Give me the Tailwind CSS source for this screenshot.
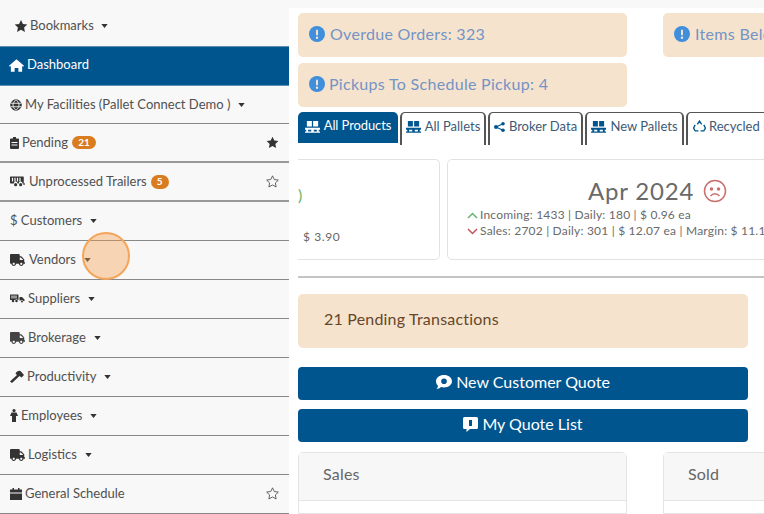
<!DOCTYPE html>
<html><head><meta charset="utf-8">
<script src="https://cdn.jsdelivr.net/npm/@tailwindcss/browser@4"></script>
</head>
<body class="m-0 w-[764px] h-[514px] overflow-hidden bg-white font-['Lato','Open_Sans',sans-serif]">
<svg class="hidden"><defs>
<symbol id="star" viewBox="0 0 24 24"><path d="M12 1.500l3.300 6.900 7.500 1-5.500 5.200 1.400 7.500L12 18.400l-6.700 3.700 1.400-7.500L1.200 9.400l7.500-1z"/></symbol>
<symbol id="truck" viewBox="0 0 640 512"><path d="M624 352h-16V243.900c0-12.700-5.100-24.900-14.100-33.900L494 110.100c-9-9-21.200-14.100-33.900-14.100H416V48c0-26.500-21.500-48-48-48H48C21.500 0 0 21.500 0 48v320c0 26.500 21.500 48 48 48h16c0 53 43 96 96 96s96-43 96-96h128c0 53 43 96 96 96s96-43 96-96h48c8.800 0 16-7.200 16-16v-32c0-8.800-7.200-16-16-16zM160 464c-26.500 0-48-21.500-48-48s21.500-48 48-48 48 21.500 48 48-21.500 48-48 48zm320 0c-26.500 0-48-21.500-48-48s21.500-48 48-48 48 21.500 48 48-21.500 48-48 48zm80-208H416V144h44.100l99.900 99.900V256z"/></symbol>
<symbol id="pallet" viewBox="0 0 24 20"><path d="M3 1h8v9H3zM13 1h8v9h-8zM0 12h24v3h-2v3h2v2H0v-2h2v-3H0zM5 15v3h5v-3zM14 15v3h5v-3z"/></symbol>
<symbol id="trailer" viewBox="0 0 24 16"><path fill-rule="evenodd" d="M1 0h20a1 1 0 0 1 1 1v10h-2a3 3 0 0 0-6 0h-2a3 3 0 0 0-6 0H1a1 1 0 0 1-1-1V1a1 1 0 0 1 1-1zM3 2v6h2V2zM7 2v6h2V2zM11 2v6h2V2zM15 2v6h2V2z"/><circle cx="9" cy="13" r="2.500"/><circle cx="17" cy="13" r="2.500"/><rect x="21" y="11" width="3" height="2"/></symbol>
<symbol id="haul" viewBox="0 0 30 16"><path fill-rule="evenodd" d="M1 0h15a1 1 0 0 1 1 1v10h-1.500a3 3 0 0 0-5 0H1a1 1 0 0 1-1-1V1a1 1 0 0 1 1-1zM3 2v6h2V2zM7 2v6h2V2zM11 2v6h2V2z"/><circle cx="6" cy="13" r="2.500"/><circle cx="13" cy="13" r="2.500"/><path d="M19 5h5l5 5v3h-2.500a3 3 0 0 0-5-1H19z"/><circle cx="24" cy="14" r="2"/></symbol>
<symbol id="alert" viewBox="0 0 16 16"><circle cx="8" cy="8" r="8" fill="#3f8fdc"/><rect x="7" y="3.500" width="2" height="6" rx="1" fill="#f6e3cd"/><circle cx="8" cy="11.800" r="1.200" fill="#f6e3cd"/></symbol>
<symbol id="caret" viewBox="0 0 8 5"><path d="M0 0h8L4 5z"/></symbol>
</defs></svg>

<div class="flex h-[514px] relative">
  <nav class="w-[289px] shrink-0 bg-[#f8f8f8] text-[13px] text-[#505050] flex flex-col">
    <div class="h-[46px] flex items-center pt-[5px] pl-[14px] gap-[2px]"><svg class="w-[14px] h-[14px] fill-[#333]"><use href="#star"/></svg><span>Bookmarks</span><svg class="w-[7px] h-[4px] ml-[5px] fill-[#333]"><use href="#caret"/></svg></div>
    <div class="h-[40px] flex items-center pb-[2px] pl-[9px] gap-[3px] bg-[#00558f] text-white border-y border-[#5d8fb0]"><svg class="w-[15px] h-[13px] fill-white" viewBox="0 0 24 20"><path d="M12 0l12 10.500-1.500 1.500L21 10.800V20h-6v-6H9v6H3v-9.200L1.500 12 0 10.500z"/></svg><span>Dashboard</span></div>
    <div class="h-[38px] flex items-center pl-[10px] gap-[3px] border-b border-[#888]"><svg class="w-[12px] h-[12px] fill-none stroke-[#333] stroke-[2]" viewBox="0 0 24 24"><circle cx="12" cy="12" r="10.500" fill="#333"/><path d="M12 1.500c-8 7-8 14 0 21M12 1.500c8 7 8 14 0 21M1.500 8.500h21M1.500 15.500h21" stroke="#f8f8f8" stroke-width="1.800"/></svg><span>My Facilities (Pallet Connect Demo )</span><svg class="w-[7px] h-[4px] ml-[5px] fill-[#333]"><use href="#caret"/></svg></div>
    <div class="h-[39px] flex items-center pl-[10px] pr-[10px] gap-[3px] border-b-2 border-[#999]"><svg class="w-[9px] h-[12px] fill-[#333]" viewBox="0 0 9 12"><path d="M3 0h3v1.500h2a1 1 0 0 1 1 1V11a1 1 0 0 1-1 1H1a1 1 0 0 1-1-1V2.500a1 1 0 0 1 1-1h2zM1.500 5v1h6V5zM1.500 7.500v1h6v-1z" fill-rule="evenodd"/></svg><span>Pending</span><span class="ml-[1px] w-[24px] h-[13px] rounded-full bg-[#d97c1f] text-white text-[10px] font-bold flex items-center justify-center">21</span><svg class="ml-auto w-[13px] h-[13px] fill-[#333]"><use href="#star"/></svg></div>
    <div class="h-[39px] flex items-center pl-[10px] pr-[10px] gap-[3px] border-b-2 border-[#999]"><svg class="w-[15px] h-[11px] fill-[#333]"><use href="#trailer"/></svg><span class="ml-[1px]">Unprocessed Trailers</span><span class="ml-[1px] w-[18px] h-[14px] rounded-full bg-[#d97c1f] text-white text-[10px] font-bold flex items-center justify-center">5</span><svg class="ml-auto w-[13px] h-[13px] fill-none stroke-[#444] stroke-[1.500]"><use href="#star"/></svg></div>
    <div class="h-[39px] flex items-center pl-[10px] gap-[3px] border-b border-[#888]"><span>$ Customers</span><svg class="w-[7px] h-[4px] ml-[5px] fill-[#333]"><use href="#caret"/></svg></div>
    <div class="h-[39px] flex items-center pb-[1px] pl-[10px] gap-[4px] border-b border-[#888]"><svg class="w-[15px] h-[12px] fill-[#333]"><use href="#truck"/></svg><span>Vendors</span><svg class="w-[7px] h-[4px] ml-[4px] fill-[#333]"><use href="#caret"/></svg></div>
    <div class="h-[39px] flex items-center pb-[1px] pl-[10px] gap-[3px] border-b border-[#888]"><svg class="w-[15px] h-[11px] fill-[#333]"><use href="#haul"/></svg><span>Suppliers</span><svg class="w-[7px] h-[4px] ml-[5px] fill-[#333]"><use href="#caret"/></svg></div>
    <div class="h-[39px] flex items-center pl-[10px] gap-[3px] border-b border-[#888]"><svg class="w-[15px] h-[12px] fill-[#444]"><use href="#truck"/></svg><span>Brokerage</span><svg class="w-[7px] h-[4px] ml-[5px] fill-[#333]"><use href="#caret"/></svg></div>
    <div class="h-[39px] flex items-center pb-[1px] pl-[10px] gap-[3px] border-b border-[#888]"><svg class="w-[14px] h-[13px] fill-[#333]" viewBox="0 0 14 13"><path d="M0 11.500L7 5 5.500 3.500C7 1 9.500 0 11 1.500l3 3.500-2.500 2.500L9.500 6 2 13z"/></svg><span>Productivity</span><svg class="w-[7px] h-[4px] ml-[5px] fill-[#333]"><use href="#caret"/></svg></div>
    <div class="h-[39px] flex items-center pb-[1px] pl-[10px] gap-[3px] border-b border-[#888]"><svg class="w-[8px] h-[13px] fill-[#333]" viewBox="0 0 8 13"><circle cx="4" cy="1.600" r="1.600"/><path d="M1.500 3.500h5L8 7H6v6H2V7H0z"/></svg><span>Employees</span><svg class="w-[7px] h-[4px] ml-[5px] fill-[#333]"><use href="#caret"/></svg></div>
    <div class="h-[39px] flex items-center pb-[1px] pl-[10px] gap-[3px] border-b border-[#888]"><svg class="w-[15px] h-[12px] fill-[#333]"><use href="#truck"/></svg><span>Logistics</span><svg class="w-[7px] h-[4px] ml-[5px] fill-[#333]"><use href="#caret"/></svg></div>
    <div class="h-[39px] shrink-0 flex items-center pb-[1px] pl-[10px] pr-[10px] gap-[3px] border-b border-[#888]"><svg class="w-[12px] h-[12px] fill-[#333]" viewBox="0 0 12 12"><path d="M2.500 0h1.500v1.500h4V0h1.500v1.500H12v3H0v-3h2.500zM0 5.500h12V12H0z"/></svg><span>General Schedule</span><svg class="ml-auto w-[13px] h-[13px] fill-none stroke-[#444] stroke-[1.500]"><use href="#star"/></svg></div>
  </nav>

  <main class="flex-1 min-w-0 overflow-hidden">
    <div class="h-[8px] bg-[#f8f8f8]"></div>
    <div class="pl-[9px] pt-[5px] w-[475px]">
      <div class="flex gap-[36px] w-[700px]">
        <div class="w-[329px] h-[44px] rounded-[5px] bg-[#f6e3cd] flex items-center pb-[3px] pl-[11px] gap-[5px] text-[16px] tracking-[0.3px] text-[#7394c6]"><svg class="w-[16px] h-[16px] shrink-0"><use href="#alert"/></svg><span>Overdue Orders: 323</span></div>
        <div class="w-[329px] h-[44px] rounded-[5px] bg-[#f6e3cd] flex items-center pb-[3px] pl-[11px] gap-[5px] text-[16px] tracking-[0.3px] text-[#7394c6]"><svg class="w-[16px] h-[16px] shrink-0"><use href="#alert"/></svg><span>Items Below</span></div>
      </div>
      <div class="mt-[6px] w-[329px] h-[44px] rounded-[5px] bg-[#f6e3cd] flex items-center pb-[3px] pl-[11px] gap-[4px] text-[16px] tracking-[0.3px] text-[#7394c6]"><svg class="w-[16px] h-[16px] shrink-0"><use href="#alert"/></svg><span>Pickups To Schedule Pickup: 4</span></div>

      <div class="mt-[5px] flex gap-[2px] h-[33px] w-[700px] text-[13px] items-start">
        <div class="w-[100px] h-[31px] pb-[3px] rounded-t-[5px] bg-[#00558f] text-white flex items-center justify-center gap-[4px]"><svg class="w-[15px] h-[13px] fill-white shrink-0"><use href="#pallet"/></svg><span class="tracking-[-0.1px]">All Products</span></div>
        <div class="w-[86px] h-[33px] pb-[5px] rounded-t-[5px] border-x-2 border-t border-[#555] text-[#3d5a75] flex items-center justify-center gap-[4px]"><svg class="w-[15px] h-[13px] fill-[#00558f] shrink-0"><use href="#pallet"/></svg><span>All Pallets</span></div>
        <div class="w-[95px] h-[33px] pb-[5px] rounded-t-[5px] border-x-2 border-t border-[#555] text-[#3d5a75] flex items-center justify-center gap-[4px]"><svg class="w-[11px] h-[10px] fill-[#00558f] shrink-0" viewBox="0 0 11 10"><circle cx="2" cy="5" r="2"/><circle cx="9" cy="1.800" r="1.800"/><circle cx="9" cy="8.200" r="1.800"/><path d="M2 5l7-3.200M2 5l7 3.200" stroke="#00558f" stroke-width="1.200"/></svg><span>Broker Data</span></div>
        <div class="w-[99px] h-[33px] pb-[5px] rounded-t-[5px] border-x-2 border-t border-[#555] text-[#3d5a75] flex items-center justify-center gap-[4px]"><svg class="w-[15px] h-[13px] fill-[#00558f] shrink-0"><use href="#pallet"/></svg><span>New Pallets</span></div>
        <div class="w-[120px] h-[33px] pb-[5px] rounded-t-[5px] border-x-2 border-t border-[#555] text-[#3d5a75] flex items-center pl-[5px] gap-[3px]"><svg class="w-[13px] h-[13px] shrink-0 fill-none stroke-[#00558f] stroke-[2.500]" viewBox="0 0 24 24"><path d="M8 8l4-6 4 6M20 9l3 6-3 5h-6M4 9l-3 6 3 5h6"/></svg><span class="whitespace-nowrap">Recycled Pallets</span></div>
      </div>

      <div class="mt-[14px] flex gap-[7px] w-[700px] h-[101px] -ml-[9px] pl-[9px] overflow-hidden">
        <div class="w-[142px] shrink-0 h-full border-y border-r border-[#e2e2e2] rounded-r-[5px] flex flex-col text-[#666]">
          <span class="text-[#69b56b] text-[16px] leading-none mt-[27px]">)</span>
          <span class="text-[12px] tracking-[0.6px] mt-[25px] pl-[5px]">$ 3.90</span>
        </div>
        <div class="w-[500px] shrink-0 h-full border border-[#e2e2e2] rounded-[5px] pl-[19px] relative text-[#6a6a6a]">
          <div class="absolute left-[140px] top-[16px] flex items-center gap-[9px] whitespace-nowrap text-[24px] leading-[30px] tracking-[0.8px]"><span>Apr 2024</span><svg class="w-[24px] h-[24px] fill-none stroke-[#c9706f] stroke-[1.500]" viewBox="0 0 24 24"><circle cx="12" cy="12" r="10.500"/><path d="M7.500 17c2.500-3 6.500-3 9 0"/><circle cx="8.500" cy="10" r="1" fill="#c9706f"/><circle cx="15.500" cy="10" r="1" fill="#c9706f"/></svg></div>
          <div class="pt-[47px] text-[12px] leading-[16px] tracking-[0.2px] whitespace-nowrap">
            <div class="flex items-center gap-[2px]"><svg class="w-[11px] h-[7px] shrink-0 fill-none stroke-[#67b56d] stroke-[1.500]" viewBox="0 0 11 7"><path d="M1 6l4.500-4.500L10 6"/></svg><span>Incoming: 1433 | Daily: 180 | $ 0.96 ea</span></div>
            <div class="flex items-center gap-[2px]"><svg class="w-[11px] h-[7px] shrink-0 fill-none stroke-[#c2545a] stroke-[1.500]" viewBox="0 0 11 7"><path d="M1 1l4.500 4.500L10 1"/></svg><span>Sales: 2702 | Daily: 301 | $ 12.07 ea | Margin: $ 11.10 ea</span></div>
          </div>
        </div>
      </div>

      <div class="mt-[16px] h-[2px] bg-[#c4c4c4] w-[466px]"></div>
      <div class="mt-[16px] w-[450px] h-[54px] pb-[4px] rounded-[5px] bg-[#f6e3cd] flex items-center pl-[26px] text-[16px] tracking-[0.2px] text-[#65472a]">21 Pending Transactions</div>
      <button class="mt-[19px] w-[450px] h-[33px] pb-[3px] rounded-[4px] bg-[#00558f] text-white text-[16px] flex items-center justify-center gap-[4px]"><svg class="w-[16px] h-[14px]" viewBox="0 0 16 14"><path fill="#fff" d="M8 0c4.400 0 8 2.700 8 6.200s-3.600 6.200-8 6.200c-1 0-2-.1-2.900-.4C3.800 13.200 2 14 .5 14c.9-1 1.500-2.200 1.600-3.200C.8 9.700 0 8 0 6.200 0 2.700 3.600 0 8 0z"/><circle cx="8" cy="6.200" r="2.800" fill="#00558f"/></svg><span>New Customer Quote</span></button>
      <button class="mt-[9px] w-[450px] h-[33px] pb-[3px] rounded-[4px] bg-[#00558f] text-white text-[16px] flex items-center justify-center gap-[4px]"><svg class="w-[15px] h-[15px]" viewBox="0 0 15 15"><path fill="#fff" d="M1.500 0h12A1.500 1.500 0 0 1 15 1.500v9a1.500 1.500 0 0 1-1.500 1.500H7L3.500 15v-3h-2A1.500 1.500 0 0 1 0 10.500v-9A1.500 1.500 0 0 1 1.500 0z"/><rect x="6" y="3" width="3" height="6" fill="#00558f"/></svg><span>My Quote List</span></button>
      <div class="mt-[10px] flex gap-[36px] w-[700px]">
        <div class="w-[329px] h-[62px] rounded-t-[5px] border border-[#e4e4e4]"><div class="h-[48px] pb-[5px] bg-[#f7f7f7] border-b border-[#e4e4e4] flex items-center pl-[24px] text-[16px] tracking-[0.2px] text-[#666]">Sales</div></div>
        <div class="w-[329px] h-[62px] rounded-t-[5px] border border-[#e4e4e4]"><div class="h-[48px] pb-[5px] bg-[#f7f7f7] border-b border-[#e4e4e4] flex items-center pl-[24px] text-[16px] tracking-[0.2px] text-[#666]">Sold</div></div>
      </div>
    </div>
  </main>
  <div class="absolute left-[82px] top-[232px] w-[48px] h-[48px] rounded-full bg-[#f59e4c]/40 border-2 border-[#f5a55a]"></div>
</div>
</body></html>
